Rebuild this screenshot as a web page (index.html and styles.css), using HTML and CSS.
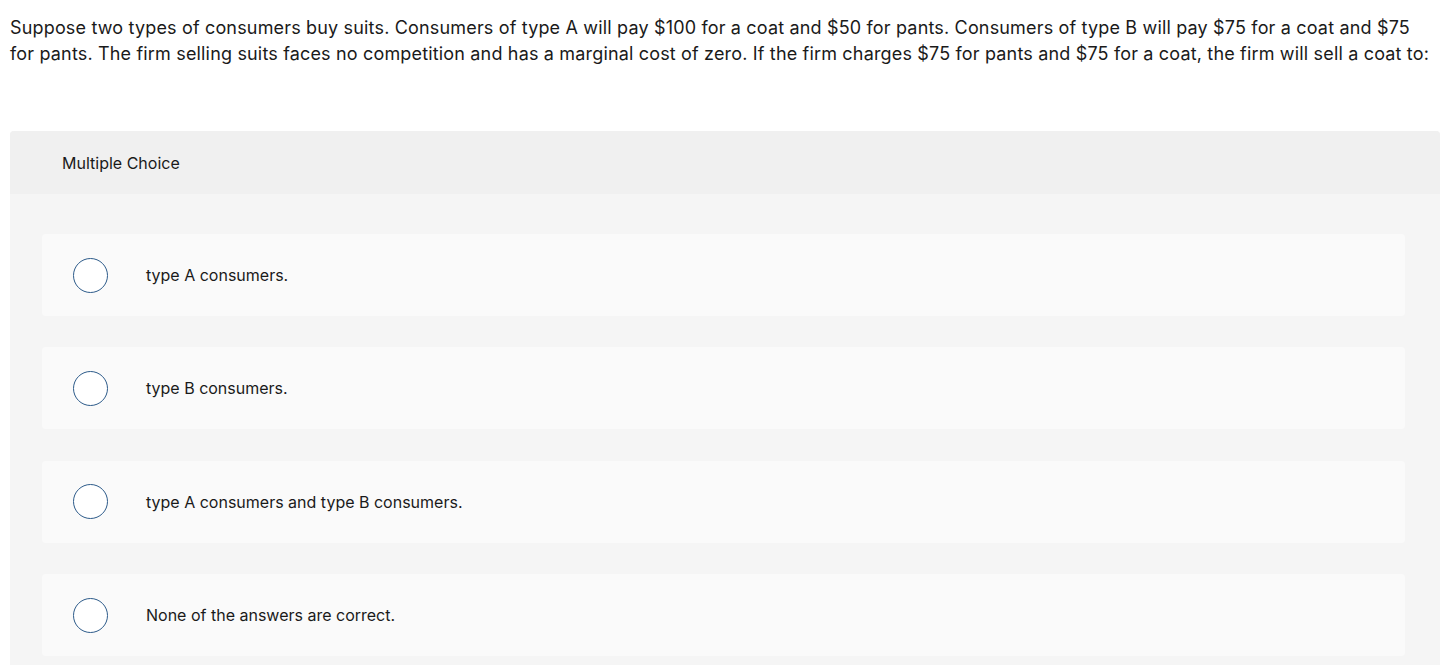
FILE: index.html
```html
<!DOCTYPE html>
<html>
<head>
<meta charset="utf-8">
<link rel="stylesheet" href="styles.css">
</head>
<body>
<p class="question">Suppose two types of consumers buy suits. Consumers of type A will pay $100 for a coat and $50 for pants. Consumers of type B will pay $75 for a coat and $75 for pants. The firm selling suits faces no competition and has a marginal cost of zero. If the firm charges $75 for pants and $75 for a coat, the firm will sell a coat to:</p>
<div class="panel">
  <div class="panel-head">Multiple Choice</div>
  <div class="panel-body">
    <div class="option"><span class="radio"></span><span class="label">type A consumers.</span></div>
    <div class="option"><span class="radio"></span><span class="label">type B consumers.</span></div>
    <div class="option"><span class="radio"></span><span class="label">type A consumers and type B consumers.</span></div>
    <div class="option"><span class="radio"></span><span class="label">None of the answers are correct.</span></div>
  </div>
</div>
</body>
</html>
```
FILE: styles.css
```css
html, body {
  margin: 0;
  padding: 0;
  background: #fff;
}
body {
  font-family: "Inter", "Liberation Sans", sans-serif;
  font-variant-ligatures: none;
  color: #1a1a1a;
  padding: 0 11px 0 10px;
}
.question {
  margin: 0;
  padding: 15px 6px 0 0;
  font-size: 18px;
  line-height: 26px;
  letter-spacing: 0.167px;
}
.panel {
  margin-top: 64px;
  border-radius: 4px 4px 0 0;
  overflow: hidden;
  background: #f5f5f5;
}
.panel-head {
  background: #f0f0f0;
  height: 63px;
  display: flex;
  align-items: center;
  padding-left: 52px;
  font-size: 16px;
}
.panel-body {
  padding: 40px 35px 20px 32px;
  display: flex;
  flex-direction: column;
  gap: 31.4px;
}
.option {
  background: #fafafa;
  border-radius: 4px;
  height: 82px;
  display: flex;
  align-items: center;
  padding-left: 31px;
}
.radio {
  width: 33px;
  height: 33px;
  border: 1.5px solid #2d5b8a;
  border-radius: 50%;
  background: #fff;
  flex: none;
}
.label {
  margin-left: 38px;
  font-size: 16px;
}
```
